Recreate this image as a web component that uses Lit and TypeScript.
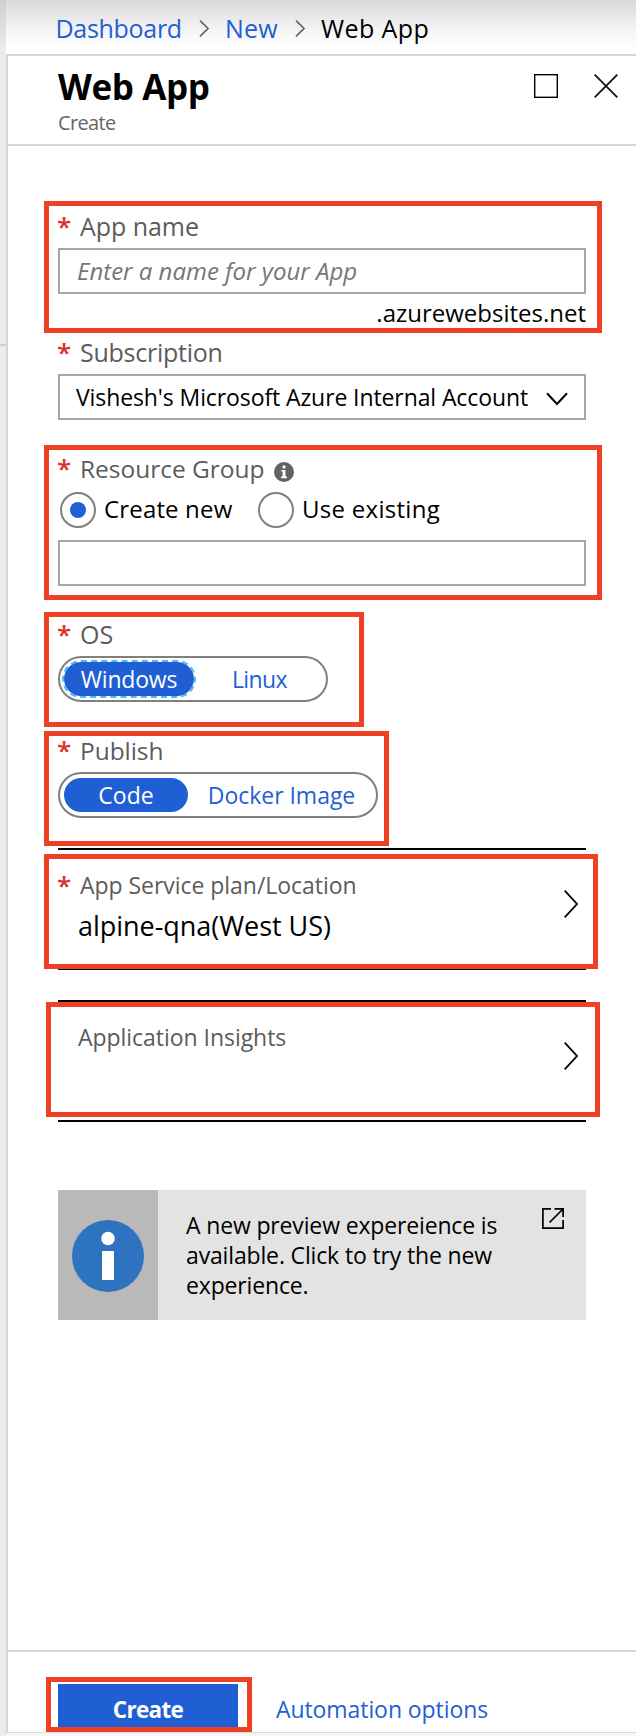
import { LitElement, html, css, svg } from 'lit';
import { customElement, property, state } from 'lit/decorators.js';

const crumbArrow = html`
  <svg width="10" height="17" fill="none" stroke="#666" stroke-width="1.7"><path d="M1 .7L9 8.5L1 16.3"/></svg>`;

const rowArrow = html`
  <svg width="14" height="28" fill="none" stroke="#000" stroke-width="1.8"><path d="M.7 .7L13 14L.7 27.3"/></svg>`;

@customElement('field-label')
class FieldLabel extends LitElement {
  @property() text = '';
  static styles = css`
    :host { display: flex; color: #5c5c5c; white-space: nowrap; }
    .star { width: 23px; margin-left: -1px; flex: none; color: #d8302c; font-size: 26px; font-weight: 600; }
  `;
  render() {
    return html`<span class="star">*</span><span>${this.text}</span><slot></slot>`;
  }
}

@customElement('pill-switch')
class PillSwitch extends LitElement {
  @property({ type: Array }) options: string[] = [];
  @property({ type: Array }) widths: number[] = [];
  @property({ type: Array }) spacing: number[] = [];
  @property({ type: Boolean }) focused = false;
  @state() private selected = 0;
  static styles = css`
    :host { display: block; }
    .track {
      box-sizing: border-box; display: inline-flex; height: 46px; padding: 4px;
      border: 2px solid #808080; border-radius: 23px; background: #fff; vertical-align: top;
    }
    .option {
      height: 34px; line-height: 34px; border-radius: 17px; text-align: center;
      color: #1f5fd3; font-size: 23px; white-space: nowrap; cursor: pointer;
    }
    .option:last-child { padding-left: 3px; box-sizing: border-box; }
    .on { background: #1f5fd3; color: #fff; }
    .ring { outline: 2px dashed #52b9ee; }
  `;
  render() {
    return html`<div class="track">${this.options.map((o, i) => html`
      <div class="option ${i === this.selected ? 'on' : ''} ${i === this.selected && this.focused ? 'ring' : ''}"
        style="width:${this.widths[i]}px;letter-spacing:${this.spacing[i]}px"
        @click=${() => (this.selected = i)}>${o}</div>`)}</div>`;
  }
}

@customElement('app-root')
class AppRoot extends LitElement {
  static styles = css`
    :host {
      display: flex; height: 1736px; width: 636px; overflow: hidden; background: #fff;
      font-family: "Open Sans", "Noto Sans", sans-serif; color: #000; font-size: 24px;
    }
    * { box-sizing: border-box; }
    svg { display: block; flex: none; overflow: visible; }
    .rail { width: 6px; flex: none; display: flex; flex-direction: column;
      background: linear-gradient(#cfcfcf, #ececec 50px); }
    .rail-top { height: 346px; border-bottom: 2px solid #cfcfcf; }
    .main { flex: 1; display: flex; flex-direction: column; min-width: 0; }
    .crumbs {
      height: 54px; flex: none; display: flex; padding-left: 49.5px;
      line-height: 56px; font-size: 25px; white-space: nowrap;
      background: linear-gradient(#dadada, #e4e4e4 12px, #f6f6f6 32px, #fff 50px);
    }
    .crumbs svg { margin-top: 20px; }
    .link { color: #1f5fd3; }
    .c1 { width: 143.5px; letter-spacing: -0.3px; }
    .c2 { width: 70px; letter-spacing: 0.2px; }
    .c3 { margin-left: 16px; letter-spacing: 0.4px; }
    .s2 { margin-left: 16px; }
    .blade {
      flex: 1; display: flex; flex-direction: column;
      border-top: 2px solid #d5d5d5; border-left: 2px solid #d5d5d5;
    }
    .head { height: 90px; flex: none; display: flex; border-bottom: 2px solid #d5d5d5; padding: 0 18px 0 50px; }
    .titles { flex: 1; }
    .title { font-size: 35px; font-weight: 700; letter-spacing: -0.4px; line-height: 62px; height: 56px; }
    .sub { font-size: 20px; letter-spacing: -0.65px; color: #666; line-height: 22px; }
    .tools { display: flex; gap: 36px; padding-top: 18px; }
    .content { flex: 1; padding: 55px 0 0 50px; }
    .mark { border: 5px solid #ed4024; margin-left: -14px; padding-left: 9px; position: relative; }
    .name { width: 558px; height: 132px; padding-right: 11px; }
    .name field-label { height: 42px; line-height: 40px; font-size: 25px; letter-spacing: -0.05px; }
    .input {
      height: 46px; width: 528px; border: 2px solid #a6a6a6; background: #fff;
      display: flex; padding-left: 17px; line-height: 44px; white-space: nowrap;
    }
    .hint { font-style: italic; color: #767676; font-size: 24px; line-height: 42px; }
    .suffix { text-align: right; font-size: 24px; line-height: 38px; height: 34px; }
    .subscription { height: 41px; line-height: 38px; font-size: 25px; letter-spacing: -0.25px; }
    .select { padding-left: 16px; font-size: 23px; letter-spacing: -0.1px; line-height: 42px; }
    .select svg { margin: 16px 0 0 18px; }
    .group { width: 558px; height: 155px; margin-top: 25px; }
    .group field-label { height: 42px; line-height: 37px; font-size: 24.5px; letter-spacing: -0.02px; }
    .info { margin: 12px 0 0 9.5px; }
    .radios { display: flex; height: 36px; margin-bottom: 12px; padding-left: 2px; line-height: 33px; }
    .radio { display: flex; white-space: nowrap; }
    .radio svg { margin-right: 8px; }
    .r1 { width: 198px; letter-spacing: 0.16px; }
    .r2 { letter-spacing: 0.29px; }
    .os { width: 320px; height: 115px; margin-top: 12px; }
    .os field-label { height: 39px; line-height: 35px; font-size: 25px; }
    .publish { width: 345px; height: 115px; margin-top: 4px; }
    .publish field-label { height: 36px; line-height: 29px; font-size: 24.5px; letter-spacing: -0.05px; }
    .rule { width: 528px; height: 2px; background: #000; }
    .above { margin: 2px 0 4px; }
    .below { margin: -1px 0 30px; }
    .last { margin-top: 3px; }
    .row { width: 554px; height: 115px; display: flex; padding-right: 15px; }
    .row svg { margin-top: 31px; }
    .text { flex: 1; font-size: 23px; line-height: 32px; padding-top: 10px; letter-spacing: -0.04px; }
    .value { font-size: 27px; line-height: 50px; padding-left: 20px; }
    .insights { margin-left: -12px; padding-left: 27px; padding-right: 17px; color: #5c5c5c; }
    .insights .text { padding-top: 14px; }
    .insights svg { margin-top: 35px; }
    .banner { width: 528px; height: 130px; margin-top: 68px; display: flex; background: #e3e3e3; }
    .badge { width: 100px; background: #b9b9b9; padding: 30px 0 0 14px; }
    .copy { width: 356px; padding: 20px 0 0 28px; font-size: 23px; line-height: 30px; letter-spacing: -0.15px; white-space: nowrap; }
    .popout { margin: 18px 0 0 27.5px; }
    .foot { height: 82px; flex: none; border-top: 2px solid #d5d5d5; display: flex; padding: 25px 0 0 50px; }
    .create { width: 206px; height: 55px; margin-left: -12px; padding: 2px 9px 0 7px; }
    .button {
      height: 43px; background: #1f5fd3; color: #fff; text-align: center; width: 180px;
      font-size: 22.5px; font-weight: 700; letter-spacing: -0.7px; line-height: 51px;
    }
    .auto { margin-left: 24px; font-size: 23px; letter-spacing: -0.08px; line-height: 64px; white-space: nowrap; }
    .edge { height: 4px; flex: none; background: #f6f6f6; border-top: 1px solid #dadada; }
  `;

  @state() private createNew = true;

  private radio(on: boolean) {
    return html`<svg width="36" height="36" fill="none">
      <circle cx="18" cy="18" r="17" fill="#fff" stroke="#808080" stroke-width="2"/>
      ${on ? svg`<circle cx="18" cy="18" r="8" fill="#1f5fd3"/>` : ''}
    </svg>`;
  }

  render() {
    return html`
      <div class="rail"><div class="rail-top"></div></div>
      <div class="main">
        <div class="crumbs">
          <span class="link c1">Dashboard</span>${crumbArrow}
          <span class="link c2 s2">New</span>${crumbArrow}
          <span class="c3">Web App</span>
        </div>
        <div class="blade">
          <div class="head">
            <div class="titles">
              <div class="title">Web App</div>
              <div class="sub">Create</div>
            </div>
            <div class="tools">
              <svg width="24" height="24" fill="none" stroke="#000"><rect x=".7" y=".7" width="22.6" height="22.6" stroke-width="1.4"/></svg>
              <svg width="24" height="24" fill="none" stroke="#111" stroke-width="1.8"><path d="M.7 .7L23.3 23.3M23.3 .7L.7 23.3"/></svg>
            </div>
          </div>

          <div class="content">
            <div class="mark name">
              <field-label text="App name"></field-label>
              <div class="input hint">Enter a name for your App</div>
              <div class="suffix">.azurewebsites.net</div>
            </div>

            <field-label class="subscription" text="Subscription"></field-label>
            <div class="input select">
              <span>Vishesh's Microsoft Azure Internal Account</span>
              <svg width="22" height="14" fill="none" stroke="#000" stroke-width="2"><path d="M1 1.2L11 12L21 1.2"/></svg>
            </div>

            <div class="mark group">
              <field-label text="Resource Group">
                <svg class="info" width="20" height="20">
                  <circle cx="10" cy="10" r="10" fill="#636363"/>
                  <circle cx="10" cy="5" r="1.7" fill="#fff"/>
                  <path d="M7.3 8H11.5V14.6H13V16.2H7V14.6H8.6V9.6H7.3Z" fill="#fff"/>
                </svg>
              </field-label>
              <div class="radios">
                <div class="radio r1" @click=${() => (this.createNew = true)}>${this.radio(this.createNew)}Create new</div>
                <div class="radio r2" @click=${() => (this.createNew = false)}>${this.radio(!this.createNew)}Use existing</div>
              </div>
              <div class="input"></div>
            </div>

            <div class="mark os">
              <field-label text="OS"></field-label>
              <pill-switch focused .options=${['Windows', 'Linux']} .widths=${[130, 128]} .spacing=${[-0.2, -0.6]}></pill-switch>
            </div>

            <div class="mark publish">
              <field-label text="Publish"></field-label>
              <pill-switch .options=${['Code', 'Docker Image']} .widths=${[124, 184]} .spacing=${[0, -0.03]}></pill-switch>
            </div>

            <div class="rule above"></div>
            <div class="mark row">
              <div class="text">
                <field-label text="App Service plan/Location"></field-label>
                <div class="value">alpine-qna(West US)</div>
              </div>
              ${rowArrow}
            </div>
            <div class="rule below"></div>
            <div class="rule"></div>
            <div class="mark row insights">
              <div class="text">Application Insights</div>
              ${rowArrow}
            </div>
            <div class="rule last"></div>

            <div class="banner">
              <div class="badge">
                <svg width="72" height="72">
                  <circle cx="36" cy="36" r="36" fill="#2e73c0"/>
                  <circle cx="36" cy="18.5" r="6.8" fill="#fff"/>
                  <rect x="30" y="31" width="12" height="29" fill="#fff"/>
                </svg>
              </div>
              <div class="copy">A new preview expereience is<br>available. Click to try the new<br>experience.</div>
              <svg class="popout" width="22" height="21" fill="none" stroke="#000" stroke-width="1.7">
                <path d="M9 .9H.9V20.1H21.1V12M12.5 .9H21.1V9M21 1L7.5 14.5"/>
              </svg>
            </div>
          </div>

          <div class="foot">
            <div class="mark create"><div class="button">Create</div></div>
            <div class="auto link">Automation options</div>
          </div>
        </div>
        <div class="edge"></div>
      </div>`;
  }
}
